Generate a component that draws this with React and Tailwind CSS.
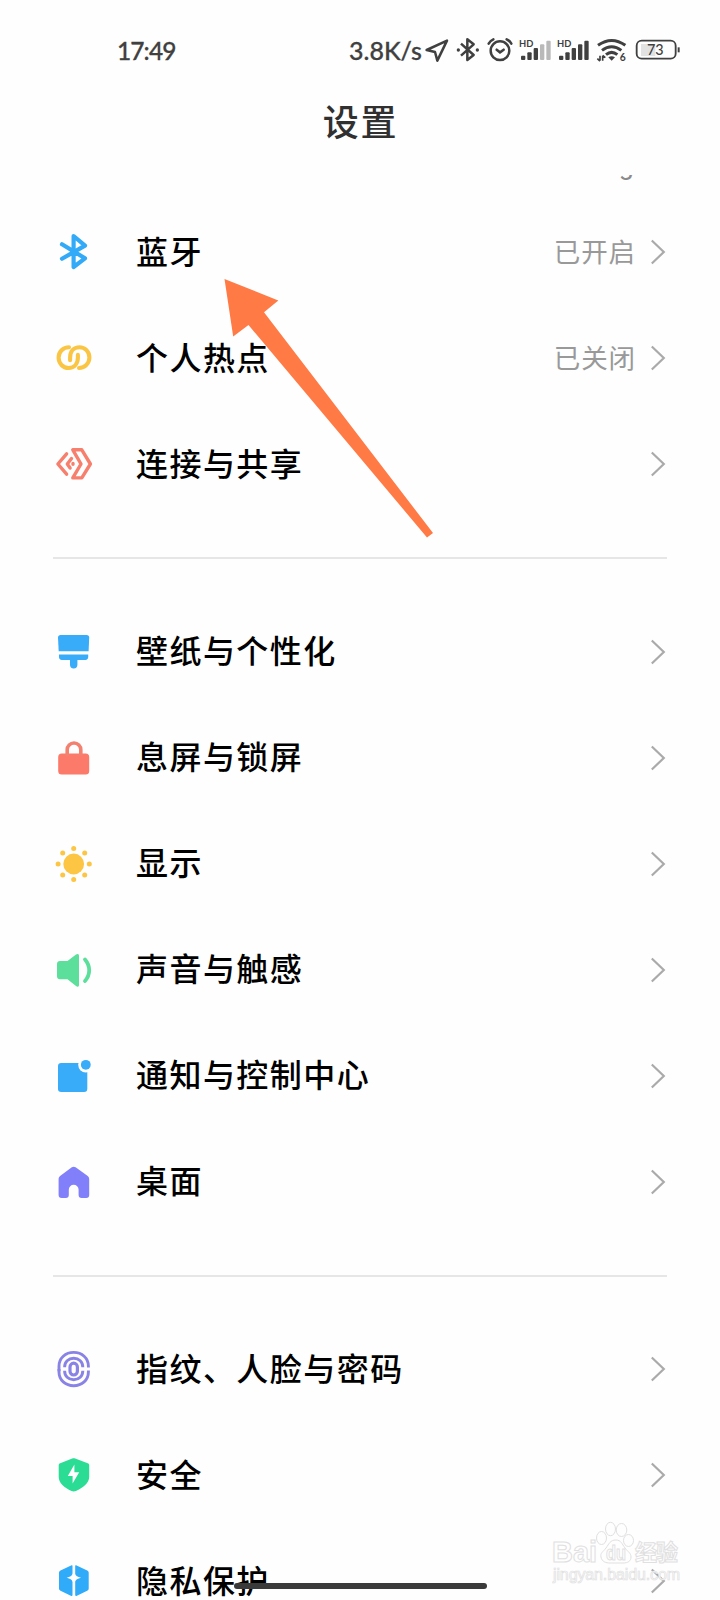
import React from 'react';

// Menu icons, all drawn on a 40x40 grid
const icons = {
  bluetooth: (
    <path d="M8 12.3 31 26.3 19.6 35V4L31 13.6 8 26.8" fill="none" stroke="#33aaf8" strokeWidth="4.200" strokeLinecap="round" strokeLinejoin="round" />
  ),
  hotspot: (
    <g fill="none" stroke="#fbc544" strokeWidth="4.100" strokeLinecap="round">
      <path d="M15 9.2C9 9.2 4.6 14 4.6 19.6 4.6 25.5 9 30 14.5 30c6 0 9.400-4.5 9.400-10.5v-2.6" />
      <path d="M25 30c6 0 10.4-4.8 10.4-10.4C35.4 13.7 31 9.2 25.500 9.2c-6 0-9.400 4.500-9.400 10.500v2.600" />
    </g>
  ),
  share: (
    <g fill="none" stroke="#f67f6e" strokeWidth="3.4" strokeLinecap="round" strokeLinejoin="round">
      <path d="M18.8 5.8h9L36.4 20l-8.6 13.9h-9L27 20z" />
      <path d="M12.6 9.8 3.9 20l8.7 10.2" />
      <path d="m17.500 14.500-4.200 5.500 2.800 4M19 19.5v.8" />
    </g>
  ),
  brush: (
    <g fill="#38abf9">
      <path d="M6.500 3h26.200c1.600 0 2.500 1 2.500 2.500l-.6 13.800H4.700L4 5.500C4 4 5 3 6.500 3z" />
      <path d="M5 22.600h29.200V25c0 1.800-1 2.900-2.800 2.900h-8v4.900a3.700 3.700 0 0 1-7.400 0v-4.900H7.800C6 27.900 5 26.800 5 25z" />
    </g>
  ),
  lock: (
    <g>
      <rect x="4.200" y="15.600" width="31" height="21" rx="3.500" fill="#fb7a69" />
      <path d="M13.200 18v-6.200a6.800 6.800 0 0 1 13.600 0V18" fill="none" stroke="#f3816f" strokeWidth="3.600" />
    </g>
  ),
  sun: (
    <g fill="#fdc544">
      <circle cx="19.700" cy="20" r="10.400" />
      <circle cx="19.700" cy="4.400" r="2.500" />
      <circle cx="19.700" cy="35.600" r="2.500" />
      <circle cx="4.100" cy="20" r="2.500" />
      <circle cx="35.300" cy="20" r="2.500" />
      <circle cx="8.700" cy="9" r="2.500" />
      <circle cx="30.700" cy="9" r="2.500" />
      <circle cx="8.700" cy="31" r="2.500" />
      <circle cx="30.700" cy="31" r="2.500" />
    </g>
  ),
  sound: (
    <g>
      <path d="M6 11h7.500L22 4.500c1.500-1.100 3-.6 3 1.200v29.200c0 1.800-1.500 2.300-3 1.200L13.500 29.300H6c-2 0-3-1-3-3V14c0-2 1-3 3-3z" fill="#5bdf9b" />
      <path d="M31 9.500c5.600 6.500 5.600 15 0 21.500" fill="none" stroke="#5bdf9b" strokeWidth="3.800" strokeLinecap="round" />
    </g>
  ),
  notification: (
    <g>
      <rect x="4" y="7" width="29.300" height="29" rx="3.200" fill="#38abf9" />
      <circle cx="31.800" cy="8.800" r="7.600" fill="#fefefe" />
      <circle cx="31.800" cy="8.800" r="4.900" fill="#38abf9" />
    </g>
  ),
  home: (
    <path d="M17.800 5.300c1.200-.9 2.600-.9 3.800 0l11.800 8.500c1.200.9 1.800 2 1.800 3.400V33c0 2-1 3-3 3h-4.600c-2 0-3-1-3-3v-5.300a4.900 4.900 0 0 0-9.800 0V33c0 2-1 3-3 3H7.600c-2 0-3-1-3-3V17.200c0-1.400.6-2.500 1.800-3.400z" fill="#827ffb" />
  ),
  fingerprint: (
    <g fill="none" stroke="#8a83e6" strokeWidth="2.900">
      <path d="M5 22.200v-5C5 9 11.500 3.400 19.700 3.400S34.400 9 34.400 17.200v1.400" />
      <path d="M5 20v3c0 8.200 6.500 13.700 14.700 13.700S34.400 31.200 34.400 23v-1.500" />
      <path d="M10.600 18.200C10.600 13 14.400 9.300 19.700 9.300s9.100 3.700 9.100 8.900" />
      <path d="M10.600 21.800c0 5.300 3.800 9 9.100 9s9.100-3.700 9.100-9" />
      <rect x="16" y="14.200" width="7.400" height="11.800" rx="3.700" strokeWidth="3.200" />
    </g>
  ),
  shield: (
    <g>
      <path d="M18.200 3.500c1-.5 2-.5 3 0l12.500 4.700c1 .4 1.500 1.100 1.500 2.100v11.500c0 6.300-6.200 11.200-13.300 14.200-1.500.6-2.900.6-4.400 0C10.400 33 4.700 28.100 4.700 21.800V10.300c0-1 .5-1.700 1.500-2.100z" fill="#2bdc94" />
      <path d="M20.400 9.500 13.800 20.900h4.800v7.700l6.600-11.400h-4.800z" fill="#fff" />
    </g>
  ),
  privacy: (
    <g>
      <path d="M17.600 4.300 6.500 9.500C5.500 10 5 10.700 5 11.800v15.600c0 1 .5 1.800 1.500 2.300l10.300 5.100c1 .5 1.700.2 1.700-.8V5c0-.8-.2-1-.9-.7zM22.100 4.300l11.100 5.200c1 .5 1.500 1.200 1.500 2.300v15.600c0 1-.5 1.800-1.500 2.300l-10.300 5.100c-1 .5-1.700.2-1.700-.8V5c0-.8.2-1 .9-.7z" fill="#2fabfa" />
      <path d="M19.850 9.500c1 4.600 2.600 6.200 7.200 7.200-4.600 1-6.200 2.600-7.200 7.200-1-4.600-2.600-6.200-7.200-7.200 4.600-1 6.200-2.600 7.200-7.200z" fill="#fff" />
    </g>
  ),
};

const groups = [
  [
    { icon: 'bluetooth', label: '蓝牙', value: '已开启' },
    { icon: 'hotspot', label: '个人热点', value: '已关闭' },
    { icon: 'share', label: '连接与共享' },
  ],
  [
    { icon: 'brush', label: '壁纸与个性化' },
    { icon: 'lock', label: '息屏与锁屏' },
    { icon: 'sun', label: '显示' },
    { icon: 'sound', label: '声音与触感' },
    { icon: 'notification', label: '通知与控制中心' },
    { icon: 'home', label: '桌面' },
  ],
  [
    { icon: 'fingerprint', label: '指纹、人脸与密码' },
    { icon: 'shield', label: '安全' },
    { icon: 'privacy', label: '隐私保护' },
  ],
];

function Row({ icon, label, value }) {
  return (
    <div className="flex h-[106px] shrink-0 items-center pl-[54px] pr-[54px]">
      <svg className="h-10 w-10 shrink-0" viewBox="0 0 40 40">{icons[icon]}</svg>
      <span className="ml-[42px] flex-1 whitespace-nowrap pb-[5px] text-[32px] font-medium leading-10 tracking-[1.45px] text-black">{label}</span>
      {value && <span className="mr-[14px] pb-0.5 text-[26.500px] font-normal leading-10 tracking-[0.9px] text-[#999999]">{value}</span>}
      <svg className="h-7 w-4" viewBox="0 0 16 28" fill="none" stroke="#aaaaaa" strokeWidth="2.200">
        <path d="m1.800 2.500 12 11.500-12 11.500" />
      </svg>
    </div>
  );
}

function StatusBar() {
  return (
    <div className="mt-[25px] flex h-[50px] items-center pl-[117px] pr-[39px] font-['Lato','Liberation_Sans',sans-serif] text-[25px] font-medium text-[#404040]">
      <span className="w-[62px] whitespace-nowrap pt-0.5 text-[24.500px] tracking-[-0.9px] [-webkit-text-stroke:0.3px_#404040]">17:49</span>
      <span className="ml-auto w-[76px] whitespace-nowrap pt-0.5 [-webkit-text-stroke:0.3px_#404040]">3.8K/s</span>
      {/* location */}
      <svg className="h-6 w-[24px]" viewBox="285 54 72 72" fill="none" stroke="#404040" strokeWidth="7.500" strokeLinejoin="round">
        <path d="m290 90 61-28-29 60-7-26z" />
      </svg>
      {/* bluetooth */}
      <svg className="ml-[7px] h-6 w-6" viewBox="378 54 72 72" fill="none" stroke="#404040" strokeWidth="7.500" strokeLinejoin="round">
        <path d="m393 71 38 34-19 15V58l19 15-38 34" />
        <circle cx="385" cy="90" r="5" fill="#404040" stroke="none" />
        <circle cx="442" cy="90" r="5" fill="#404040" stroke="none" />
      </svg>
      {/* alarm */}
      <svg className="ml-[7px] h-6 w-[26px]" viewBox="472 54 78 72" fill="none" stroke="#404040" strokeWidth="7.500" strokeLinecap="round">
        <circle cx="511" cy="92" r="28" />
        <path d="m501 89 10 8 11-8M477 71q5-9 14-13M545 71q-5-9-14-13" />
      </svg>
      {/* sim 1 */}
      <svg className="ml-[6px] h-6 w-8" viewBox="568 54 96 72" fill="#404040">
        <text x="568" y="80" fontSize="29" fontWeight="700" textLength="43" lengthAdjust="spacingAndGlyphs">HD</text>
        <rect x="574" y="107" width="13" height="13" rx="3" />
        <rect x="593" y="97" width="13" height="23" rx="3" />
        <rect x="612" y="84" width="13" height="36" rx="3" />
        <rect x="631" y="73" width="13" height="47" rx="3" fill="#b9b9b9" />
        <rect x="650" y="62" width="13" height="58" rx="3" fill="#b9b9b9" />
      </svg>
      {/* sim 2 */}
      <svg className="ml-[6px] h-6 w-8" viewBox="682 54 96 72" fill="#404040">
        <text x="682" y="80" fontSize="29" fontWeight="700" textLength="43" lengthAdjust="spacingAndGlyphs">HD</text>
        <rect x="688" y="107" width="13" height="13" rx="3" />
        <rect x="707" y="97" width="13" height="23" rx="3" />
        <rect x="726" y="84" width="13" height="36" rx="3" />
        <rect x="745" y="73" width="13" height="47" rx="3" />
        <rect x="764" y="62" width="13" height="58" rx="3" />
      </svg>
      {/* wifi 6 */}
      <svg className="ml-[7px] h-6 w-[31px] overflow-visible" viewBox="799 54 93 72" fill="none" stroke="#404040" strokeWidth="9">
        <path d="M805 76q41-29 82 0M817 91q29-22 58 0M829 104q17-14 34 0" />
        <path d="m836 112 10 10 10-10q-10-6-20 0z" fill="#404040" stroke="none" />
        <path d="M811 107v15M819 107v15M803 116l8 7M827 113l-8-7" strokeWidth="5" />
        <text x="870" y="123" fontSize="31" fontWeight="700" fill="#404040" stroke="none">6</text>
      </svg>
      {/* battery */}
      <svg className="ml-[8px] h-6 w-[46px]" viewBox="915 54 138 72" fill="none">
        <path d="M933 72h43v36h-43z" fill="#e2e2e2" />
        <rect x="920" y="62" width="117" height="54" rx="15" stroke="#404040" strokeWidth="5.500" />
        <path d="M1046 82v15" stroke="#404040" strokeWidth="6" />
        <text x="951" y="106" fontSize="46" fill="#404040" textLength="50" lengthAdjust="spacingAndGlyphs">73</text>
      </svg>
    </div>
  );
}

function Watermark() {
  return (
    <div className="absolute left-[552px] top-[1520px] h-[66px] w-[132px]">
      <svg className="h-full w-full" viewBox="0 0 132 66" fill="#fefefe" stroke="#e0e0e0" strokeWidth="1">
        <text x="0" y="42" fontSize="29" fontWeight="700" textLength="45" lengthAdjust="spacingAndGlyphs" fontFamily="Liberation Sans">Bai</text>
        <ellipse cx="49.500" cy="18" rx="5" ry="6.500" />
        <ellipse cx="58.500" cy="9" rx="5" ry="6.700" />
        <ellipse cx="69.500" cy="10" rx="5.300" ry="6.500" />
        <ellipse cx="76.500" cy="20.500" rx="5" ry="6" />
        <path d="M64 20c-6 0-7 4-10 8s-6 5-5 9c1 5 5 6 9 6h13c5 0 8-2 8-6s-3-5-6-9-4-8-9-8z" />
        <text x="54" y="40" fontSize="20" fontWeight="700" textLength="20" lengthAdjust="spacingAndGlyphs" fontFamily="Liberation Sans">du</text>
        <text x="83" y="40" fontSize="22" fontWeight="700" textLength="43" fontFamily="Noto Sans CJK SC">经验</text>
        <text x="1" y="60" fontSize="16" textLength="127" strokeWidth="0.700" fontFamily="Liberation Sans">jingyan.baidu.com</text>
      </svg>
    </div>
  );
}

export default function App() {
  return (
    <div className="relative flex h-[1600px] w-[720px] flex-col overflow-hidden bg-[#fefefe] font-['Noto_Sans_CJK_SC',sans-serif]">
      <header className="h-[175px] shrink-0">
        <StatusBar />
        <h1 className="mt-[18px] pl-px text-center text-[36px] font-medium leading-[54px] tracking-[1.700px] text-[#303030]">设置</h1>
      </header>

      <main className="flex min-h-0 flex-1 flex-col overflow-hidden">
        {/* tail of the Wi-Fi row, scrolled under the header */}
        <div className="flex h-6 shrink-0 items-start justify-end pr-[86px]">
          <span className="-mt-[28px] font-['Roboto',sans-serif] text-[27px] font-normal leading-9 text-[#8a8a8a]">g</span>
        </div>
        {groups.map((rows, i) => (
          <React.Fragment key={i}>
            {i > 0 && <hr className="mx-[53px] mt-10 mb-[39.500px] shrink-0 border-t-2 border-[#e6e6e6]" />}
            {rows.map((row) => <Row key={row.label} {...row} />)}
          </React.Fragment>
        ))}
      </main>

      <Watermark />
      <div className="absolute left-[234px] top-[1583px] h-1.5 w-[253px] rounded-full bg-[#3a3a3a]" />

      {/* pointer to the Bluetooth row */}
      <svg className="absolute left-[220px] top-[275px] h-[265px] w-[220px]" viewBox="220 275 220 265">
        <path d="m224.500 279 53.800 21.500-14.300 11.800L433 533l-6 4.500L248.500 325l-15.300 11.500z" fill="#ff7a45" />
      </svg>
    </div>
  );
}
